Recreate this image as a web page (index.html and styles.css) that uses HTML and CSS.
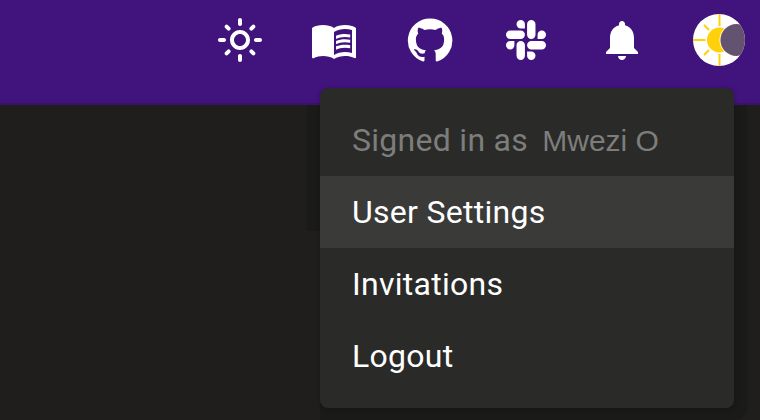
FILE: index.html
```html
<!DOCTYPE html>
<html lang="en">
<head>
<meta charset="utf-8">
<title>Account menu</title>
<link rel="stylesheet" href="styles.css">
</head>
<body>
<header class="topbar">
  <svg class="icon" viewBox="0 0 24 24"><path d="M12 9c1.65 0 3 1.35 3 3s-1.35 3-3 3-3-1.35-3-3 1.35-3 3-3m0-2c-2.76 0-5 2.24-5 5s2.24 5 5 5 5-2.24 5-5-2.240-5-5-5zM2 13h2c.55 0 1-.45 1-1s-.45-1-1-1H2c-.55 0-1 .45-1 1s.45 1 1 1zm18 0h2c.55 0 1-.45 1-1s-.45-1-1-1h-2c-.55 0-1 .45-1 1s.45 1 1 1zM11 2v2c0 .55.45 1 1 1s1-.45 1-1V2c0-.55-.45-1-1-1s-1 .45-1 1zm0 18v2c0 .55.45 1 1 1s1-.45 1-1v-2c0-.55-.45-1-1-1s-1 .45-1 1zM5.990 4.580c-.39-.39-1.030-.39-1.410 0-.39.39-.39 1.030 0 1.410l1.060 1.060c.39.39 1.030.39 1.410 0s.39-1.030 0-1.410L5.990 4.580zm12.370 12.370c-.39-.39-1.030-.39-1.410 0-.39.39-.39 1.030 0 1.410l1.060 1.060c.39.39 1.030.39 1.410 0 .39-.39.39-1.030 0-1.410l-1.060-1.060zm1.060-10.960c.39-.39.39-1.030 0-1.410-.39-.39-1.030-.39-1.410 0l-1.060 1.060c-.39.39-.39 1.030 0 1.410s1.030.39 1.410 0l1.060-1.060zM7.050 18.360c.39-.39.39-1.030 0-1.410-.39-.39-1.030-.39-1.410 0l-1.060 1.060c-.39.39-.39 1.030 0 1.410s1.030.39 1.410 0l1.060-1.060z"/></svg>
  <svg class="icon icon-book" viewBox="0 0 24 24"><path d="M21 5c-1.110-.35-2.330-.5-3.500-.5-1.950 0-4.050.4-5.500 1.500-1.450-1.100-3.550-1.500-5.500-1.500S2.450 4.900 1 6v14.650c0 .25.25.5.5.5.1 0 .15-.05.25-.05C3.100 20.450 5.050 20 6.500 20c1.950 0 4.050.4 5.500 1.500 1.350-.85 3.800-1.500 5.500-1.500 1.650 0 3.350.3 4.750 1.050.1.05.15.05.25.05.25 0 .5-.25.5-.5V6c-.6-.45-1.250-.75-2-1zm0 13.500c-1.100-.35-2.300-.5-3.500-.5-1.700 0-4.150.65-5.500 1.500V8c1.350-.85 3.800-1.500 5.500-1.500 1.200 0 2.400.15 3.500.5v11.500z"/><path d="M17.500 10.500c.88 0 1.730.09 2.600.26V9.240c-.79-.15-1.640-.24-2.600-.24-1.700 0-3.240.29-4.500.83v1.660c1.130-.64 2.700-.99 4.500-.99zM13 12.490v1.660c1.130-.64 2.700-.99 4.500-.99.88 0 1.730.09 2.600.26V11.900c-.79-.15-1.640-.24-2.600-.24-1.700 0-3.240.3-4.500.83zM17.500 14.330c-1.700 0-3.240.29-4.500.83v1.660c1.130-.64 2.700-.99 4.500-.99.88 0 1.730.09 2.600.26v-1.520c-.79-.16-1.640-.24-2.600-.24z"/></svg>
  <svg class="icon" viewBox="0 0 24 24"><path d="M12 1.270a11 11 0 00-3.480 21.460c.55.09.73-.28.73-.55v-1.840c-3.030.64-3.670-1.460-3.670-1.460-.55-1.290-1.280-1.650-1.280-1.650-.92-.65.1-.65.1-.65 1.100 0 1.730 1.100 1.730 1.100.92 1.650 2.570 1.200 3.210.92a2 2 0 01.64-1.470c-2.470-.27-5.040-1.190-5.040-5.500 0-1.100.46-2.100 1.200-2.840a3.760 3.760 0 010-2.930s.91-.28 3.110 1.100c1.800-.49 3.700-.49 5.500 0 2.100-1.380 3.020-1.100 3.020-1.100a3.760 3.760 0 01.1 2.930c.83.74 1.200 1.740 1.200 2.940 0 4.210-2.570 5.130-5.040 5.400.45.37.82.92.82 2.020v3.030c0 .27.1.64.73.55A11 11 0 0012 1.270"/></svg>
  <svg class="icon" viewBox="-2.400 -2.400 28.800 28.800"><path id="arm" d="M8.834 5.042a2.521 2.521 0 1 1 2.521-2.521v2.521zM2.521 6.313h6.313a2.521 2.521 0 0 1 0 5.042H2.521a2.521 2.521 0 0 1 0-5.042z"/><use href="#arm" transform="rotate(90 12 12)"/><use href="#arm" transform="rotate(180 12 12)"/><use href="#arm" transform="rotate(270 12 12)"/></svg>
  <svg class="icon" viewBox="0 0 24 24"><path d="M12 22c1.100 0 2-.9 2-2h-4c0 1.100.89 2 2 2zm6-6v-5c0-3.070-1.640-5.640-4.500-6.320V4c0-.83-.67-1.500-1.500-1.500s-1.500.67-1.500 1.500v.68C7.630 5.360 6 7.920 6 11v5l-2 2v1h16v-1l-2-2z"/></svg>
  <svg class="avatar" viewBox="0 0 52 52">
    <defs><clipPath id="disc"><circle cx="26" cy="26" r="26"/></clipPath></defs>
    <g clip-path="url(#disc)">
      <path fill="#fff" d="M0 0h52v52H0z"/>
      <path class="rays" d="M26.500 0v12M26.500 40v12M0 26h12.500M11 11l5 5M11 41l5-5"/>
      <circle cx="26.500" cy="26" r="12.500" fill="#ffd10b"/>
      <circle cx="43.500" cy="26" r="16.500" fill="none" stroke="#fff" stroke-width="1"/>
      <circle cx="43.500" cy="26" r="16" fill="#635370"/>
    </g>
  </svg>
</header>
<nav class="menu">
  <div class="item signed">Signed in as <span class="name">Mwezi O</span></div>
  <div class="item active">User Settings</div>
  <div class="item">Invitations</div>
  <div class="item">Logout</div>
</nav>
</body>
</html>
```
FILE: styles.css
```css
body {
  margin: 0;
  width: 760px;
  height: 420px;
  overflow: hidden;
  background: #1f1e1c;
  font-family: Roboto, sans-serif;
}

.topbar {
  box-sizing: border-box;
  display: flex;
  align-items: flex-start;
  gap: 48px;
  height: 105px;
  padding: 16px 0 0 216px;
  background: #41137c;
  border-bottom: 2px solid #381268;
}

.icon {
  flex: none;
  width: 48px;
  height: 48px;
  fill: #fff;
}

.icon-book {
  margin: 0 0 0 -2px;
}

.avatar {
  flex: none;
  width: 52px;
  height: 52px;
  margin: -2px 0 0 -1px;
}

.rays {
  fill: none;
  stroke: #ffd10b;
  stroke-width: 2;
}

.menu {
  position: absolute;
  top: 88px;
  left: 320px;
  box-sizing: border-box;
  width: 414px;
  height: 320px;
  padding: 16px 0;
  border-radius: 8px;
  background: #2a2a28;
  box-shadow: 0 1px 4px rgba(0, 0, 0, .25);
}

.menu::before {
  content: "";
  position: absolute;
  z-index: -1;
  inset: 17px -13px -12px 0;
  border-radius: 0 0 12px 0;
  background: #1a1a19;
}

.menu::after {
  content: "";
  position: absolute;
  z-index: -1;
  top: 17px;
  left: -13px;
  width: 13px;
  height: 126px;
  background: #1a1a19;
}

.item {
  display: flex;
  align-items: center;
  height: 72px;
  padding: 0 32px;
  color: #fff;
  font-size: 32px;
  letter-spacing: .28px;
  white-space: pre;
}

.signed {
  color: #7d7d7c;
}

.name {
  margin-left: 6px;
  padding-top: 1px;
  font-family: "Liberation Sans", sans-serif;
  font-size: 30px;
  letter-spacing: 0;
}

.active {
  background: #3a3a38;
}
```
